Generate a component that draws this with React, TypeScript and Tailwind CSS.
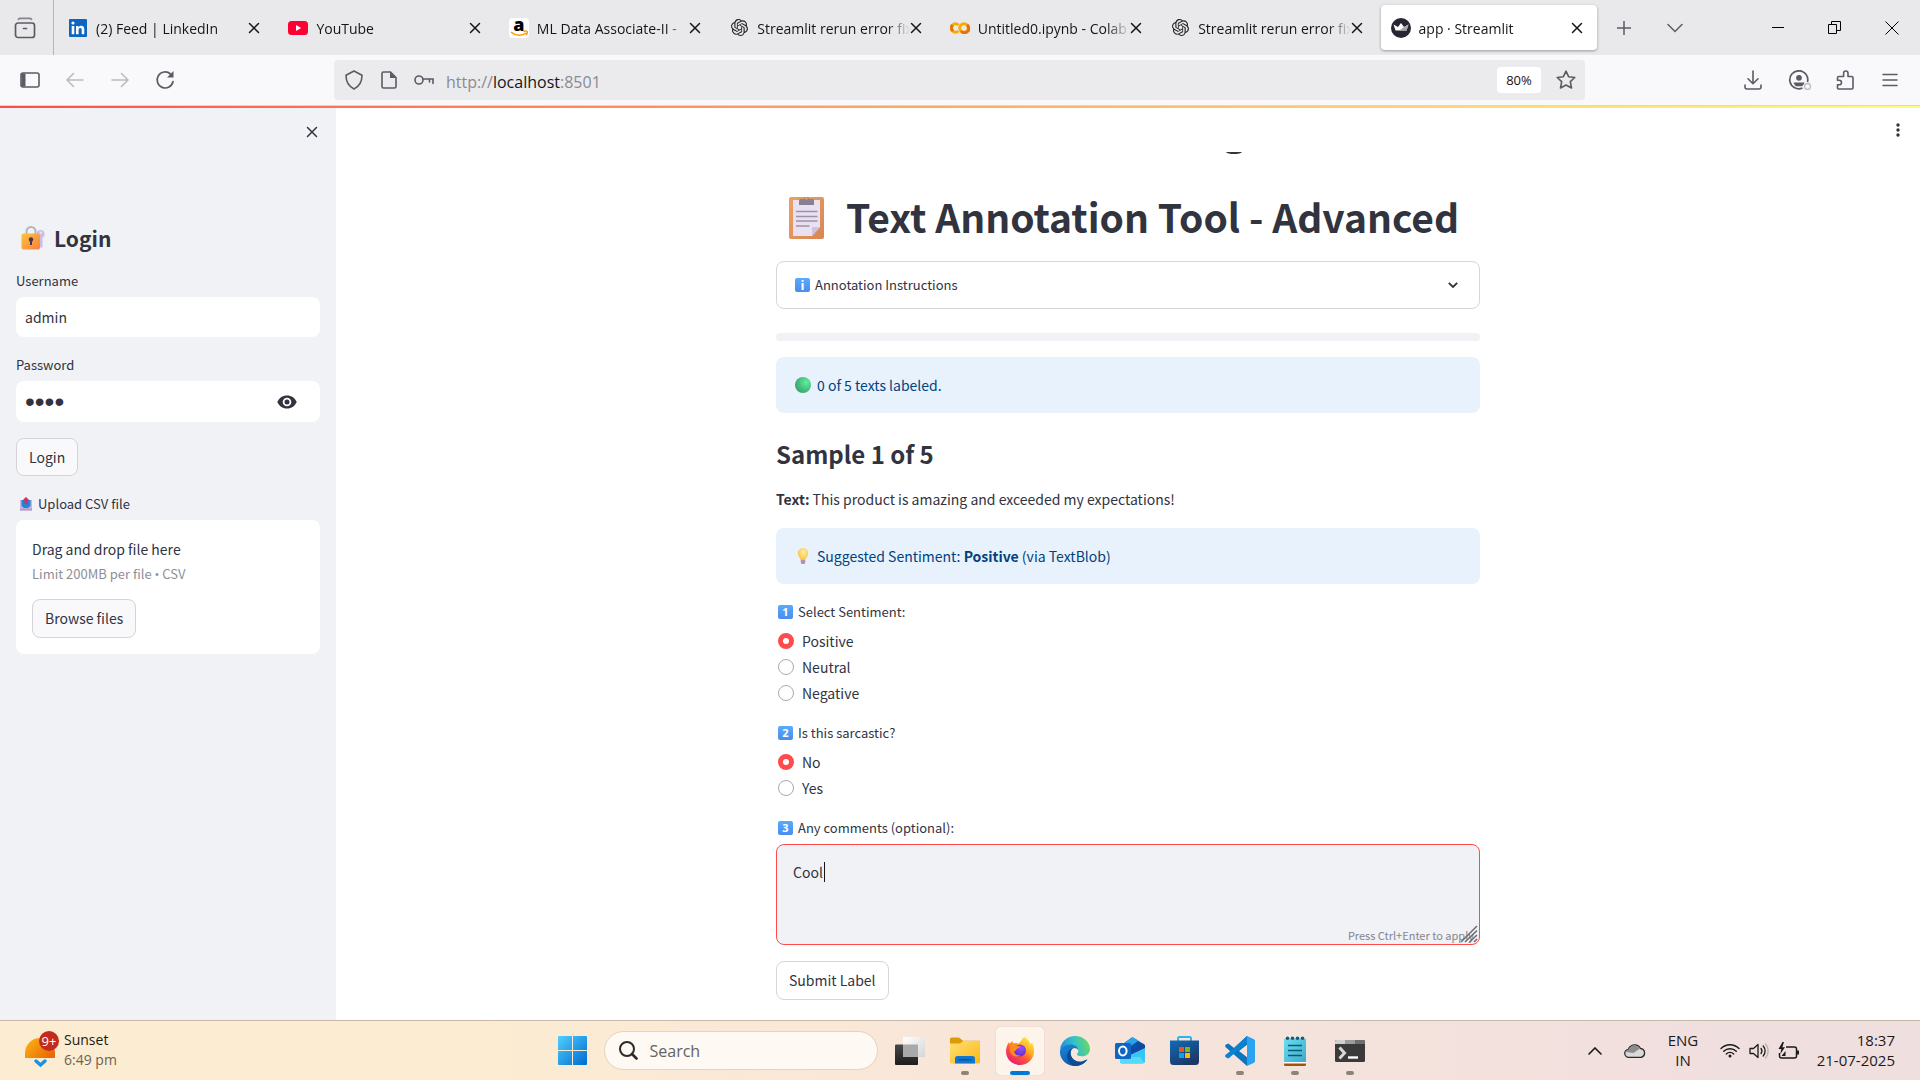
import React from "react";
import { SiOpenai } from "react-icons/si";

const TEXT = "font-['Noto_Sans_CJK_SC','Noto_Sans',sans-serif]";
const UI = "font-['Open_Sans','Noto_Sans',sans-serif]";

type P = { className?: string };

/* ---------- tab icons ---------- */

const LinkedIn = () => (
  <svg viewBox="0 0 18 18" className="size-[18px]">
    <rect width="18" height="18" rx="1" fill="#0a66c2" />
    <circle cx="4" cy="4" r="1.6" fill="#fff" />
    <path d="M2.7 7h2.6v8.300H2.700zM7 7h2.500v1.200c.5-.9 1.500-1.500 2.700-1.500 2.500 0 3.100 1.600 3.100 3.900v4.700h-2.600v-4.200c0-1.200-.2-2.200-1.500-2.200s-1.600 1-1.600 2.100v4.300H7z" fill="#fff" />
  </svg>
);
const YouTube = () => (
  <svg viewBox="0 0 20 14" className="w-5 h-3.5">
    <rect width="20" height="14" rx="3.500" fill="#ff0033" />
    <path d="M8 4l5.200 3L8 10z" fill="#fff" />
  </svg>
);
const Amazon = () => (
  <span className="relative flex size-5 items-start justify-center rounded bg-white">
    <span className="text-[18px] leading-[12px] font-extrabold text-black font-['Open_Sans',sans-serif]">a</span>
    <svg viewBox="0 0 20 20" className="absolute inset-0 size-5" fill="none" stroke="#ff9900" strokeWidth="1.500">
      <path d="M2 14c4.500 4 11 4.300 15 1M14.300 13.500c1.500-.5 3.200-.5 3.700 0s0 2.200-.8 3.500" />
    </svg>
  </span>
);
const Colab = () => (
  <svg viewBox="0 0 20 12" className="w-5 h-3" fill="none" strokeWidth="3">
    <path d="M8.500 3A4.300 4.300 0 1 0 8.500 9" stroke="#f9ab00" />
    <circle cx="14" cy="6" r="4.300" stroke="#f9ab00" />
    <path d="M11 9A4.300 4.300 0 1 0 17 3" stroke="#e8710a" />
    <path d="M2.600 3A4.300 4.300 0 0 0 3 9" stroke="#e8710a" />
  </svg>
);
const OpenAi = () => <SiOpenai className="size-[17px] text-[#222]" />;
const StreamlitCrown = () => (
  <svg viewBox="0 0 20 20" className="size-5">
    <circle cx="10" cy="10" r="10" fill="#262730" />
    <path d="M2.500 6.500l4.500 2.500L10 5l3 4 4.500-2.500L15.500 12.500h-11z" fill="#fff" />
    <path d="M13 9l4.500-2.500-2 6H8.500z" fill="#a6a6ac" />
  </svg>
);

const Cross = ({ className = "size-3" }: P) => (
  <svg viewBox="0 0 12 12" className={className} fill="none" stroke="currentColor" strokeWidth="1.500" strokeLinecap="round">
    <path d="M1.500 1.500l9 9M10.500 1.500l-9 9" />
  </svg>
);

const tabs = [
  { title: "(2) Feed | LinkedIn", icon: <LinkedIn /> },
  { title: "YouTube", icon: <YouTube /> },
  { title: "ML Data Associate-II -", icon: <Amazon /> },
  { title: "Streamlit rerun error fix", icon: <OpenAi /> },
  { title: "Untitled0.ipynb - Colab", icon: <Colab /> },
  { title: "Streamlit rerun error fix", icon: <OpenAi /> },
  { title: "app · Streamlit", icon: <StreamlitCrown />, active: true },
];

function TabStrip() {
  return (
    <div className="flex h-[55px] bg-[#e9e9eb] text-[#15141a]">
      <button aria-label="Recent browsing" className="flex w-[54px] shrink-0 items-center justify-center border-r border-[#b5b5ba] pr-1 text-[#5b5b66]">
        <svg viewBox="0 0 22 22" className="size-[22px]" fill="none" stroke="currentColor" strokeWidth="1.700" strokeLinecap="round">
          <path d="M4.500 2.300c.5-.8 1.200-1 2-1h9c.800 0 1.500.2 2 1" strokeOpacity=".7" />
          <rect x="1.500" y="6" width="19" height="14.500" rx="2.500" />
          <path d="M9.500 11.500h3" />
        </svg>
      </button>
      <div className="ml-1 grid min-w-0 flex-1 grid-cols-7 gap-1 py-[5px]">
        {tabs.map((t, i) => (
          <div
            key={i}
            className={
              t.active
                ? "flex h-[45px] min-w-0 items-center rounded bg-white pl-2.5 pr-3.5 shadow-[0_1px_3px_rgba(0,0,0,0.35)]"
                : "flex h-[45px] min-w-0 items-center pl-2.5 pr-3.5"
            }
          >
            <span className="flex w-5 shrink-0 justify-center">{t.icon}</span>
            <span className="ml-2 min-w-0 flex-1 overflow-hidden pt-0.5 text-[14px] leading-5 whitespace-nowrap [mask-image:linear-gradient(to_right,#000_85%,transparent)]">
              {t.title}
            </span>
            <button aria-label="Close tab" className="flex w-3 shrink-0 justify-center">
              <Cross />
            </button>
          </div>
        ))}
      </div>
      <div className="flex w-[323px] shrink-0 items-center text-[#5b5b66]">
        <button aria-label="New tab" className="flex w-[53px] justify-center">
          <svg viewBox="0 0 16 16" className="size-4" stroke="currentColor" strokeWidth="1.500"><path d="M8 1v14M1 8h14" /></svg>
        </button>
        <button aria-label="List all tabs" className="flex w-[49px] justify-center">
          <svg viewBox="0 0 16 10" className="w-4 h-2.5" fill="none" stroke="currentColor" strokeWidth="1.500" strokeLinecap="round"><path d="M1 1.500l7 7 7-7" /></svg>
        </button>
        <div className="ml-auto flex text-black">
          <button aria-label="Minimize" className="flex w-[57px] items-center justify-center">
            <svg viewBox="0 0 12 12" className="size-3" stroke="currentColor"><path d="M0 5.500h12" /></svg>
          </button>
          <button aria-label="Restore" className="flex w-[57px] items-center justify-center">
            <svg viewBox="0 0 13 13" className="size-[13px]" fill="none" stroke="currentColor"><path d="M.5 3.500h8v9h-8zM3.500 3.500v-3h9v9h-4" /></svg>
          </button>
          <button aria-label="Close" className="flex w-[57px] items-center justify-center">
            <svg viewBox="0 0 14 14" className="size-3.5" stroke="currentColor"><path d="M.5.5l13 13M13.500.5l-13 13" /></svg>
          </button>
        </div>
      </div>
    </div>
  );
}

function Toolbar() {
  return (
    <div className="flex h-[51px] items-center border-b border-[#d6d6e0] bg-[#f9f9fb] text-[#5b5b66]">
      <div className="flex w-[334px] shrink-0 items-center pl-[7px]">
        <button aria-label="Sidebar" className="flex w-[46px] justify-center">
          <svg viewBox="0 0 20 16" className="w-5 h-4" fill="none" stroke="currentColor" strokeWidth="1.600">
            <rect x="1" y="1" width="18" height="14" rx="2" />
            <path d="M1.500 1.500h4v13h-4z" fill="currentColor" stroke="none" />
          </svg>
        </button>
        <button aria-label="Back" className="flex w-11 justify-center text-[#bbbbc1]">
          <svg viewBox="0 0 18 16" className="w-[18px] h-4" fill="none" stroke="currentColor" strokeWidth="1.600" strokeLinecap="round" strokeLinejoin="round"><path d="M17 8H1M7.500 1.500L1 8l6.500 6.500" /></svg>
        </button>
        <button aria-label="Forward" className="flex w-[45px] justify-center text-[#bbbbc1]">
          <svg viewBox="0 0 18 16" className="w-[18px] h-4" fill="none" stroke="currentColor" strokeWidth="1.600" strokeLinecap="round" strokeLinejoin="round"><path d="M1 8h16M10.500 1.500L17 8l-6.500 6.500" /></svg>
        </button>
        <button aria-label="Reload" className="flex w-[45px] justify-center">
          <svg viewBox="0 0 20 20" className="size-5" fill="none" stroke="currentColor" strokeWidth="1.700" strokeLinecap="round">
            <path d="M18 11.500A8 8 0 1 1 15.500 4" />
            <path d="M18.500 1v6.500H12z" fill="currentColor" stroke="none" />
          </svg>
        </button>
      </div>
      <div className="flex h-10 min-w-0 flex-1 items-center rounded bg-[#ebebed] pl-[10px] pr-[9px]">
        <svg viewBox="0 0 20 20" className="size-5" fill="none" stroke="currentColor" strokeWidth="1.600" strokeLinejoin="round">
          <path d="M10 1l8 4.300c0 6-2.500 11-8 13.700C4.500 16.300 2 11.300 2 5.300z" />
        </svg>
        <svg viewBox="0 0 16 18" className="ml-[17px] w-4 h-[18px]" fill="none" stroke="currentColor" strokeWidth="1.600">
          <path d="M3 1h6.500L15 6.500V15.500a1.500 1.500 0 0 1-1.500 1.500H2.500A1.500 1.500 0 0 1 1 15.500V2.500A1.500 1.500 0 0 1 2.500 1z" />
          <path d="M9 1l6 6H9z" fill="currentColor" stroke="none" />
        </svg>
        <svg viewBox="0 0 20 12" className="ml-[17px] w-5 h-3" fill="none" stroke="currentColor" strokeWidth="1.600" strokeLinecap="round">
          <circle cx="5" cy="6" r="4" />
          <path d="M9 5h10v4.500M15.500 5v3" />
        </svg>
        <label className="sr-only" htmlFor="url">Address</label>
        <div className="relative ml-3 mt-[3px] min-w-0 flex-1">
          <input id="url" readOnly value="http://localhost:8501" className="w-full bg-transparent text-[16px] leading-6 text-transparent outline-none" />
          <span aria-hidden className="pointer-events-none absolute inset-0 text-[16px] leading-6 text-[#8a8a90]">
            http://<span className="text-[#15141a]">localhost</span>:8501
          </span>
        </div>
        <button className="h-[26px] w-11 rounded bg-white text-[13px] leading-[26px] text-[#15141a]">80%</button>
        <button aria-label="Bookmark" className="ml-[15px]">
          <svg viewBox="0 0 20 20" className="size-5" fill="none" stroke="currentColor" strokeWidth="1.600" strokeLinejoin="round">
            <path d="M10 1.200l2.600 5.500 6.200.8-4.500 4.200 1.200 6.300L10 15l-5.500 3 1.200-6.300L1.200 7.500l6.200-.8z" />
          </svg>
        </button>
      </div>
      <div className="ml-[145px] flex shrink-0 items-center pr-[7px]">
        <button aria-label="Downloads" className="flex w-[46px] justify-center">
          <svg viewBox="0 0 18 20" className="w-[18px] h-5" fill="none" stroke="currentColor" strokeWidth="1.600" strokeLinecap="round" strokeLinejoin="round">
            <path d="M9 1v12.500M4 8.800l5 4.900 5-4.900M1 15v2a2 2 0 0 0 2 2h12a2 2 0 0 0 2-2v-2" />
          </svg>
        </button>
        <button aria-label="Account" className="flex w-[47px] justify-center">
          <svg viewBox="0 0 24 20" className="w-6 h-5" fill="none" stroke="currentColor" strokeWidth="1.700">
            <path d="M14.500 18A9 9 0 1 1 19.500 12" />
            <circle cx="11" cy="7.800" r="2.900" fill="currentColor" stroke="none" />
            <path d="M5.500 12.500h11c-.5 1.500-1.500 3-2.500 3.700H8c-1.200-.8-2-2.200-2.500-3.700z" fill="currentColor" stroke="none" />
            <circle cx="19.500" cy="16.500" r="3" stroke="#bbbbc1" strokeWidth="1.300" />
          </svg>
        </button>
        <button aria-label="Extensions" className="flex w-11 justify-center">
          <svg viewBox="0 0 18 20" className="w-[18px] h-5" fill="none" stroke="currentColor" strokeWidth="1.600" strokeLinejoin="round">
            <path d="M2.500 19h13.300a1.200 1.200 0 0 0 1.200-1.200V8a1.500 1.500 0 0 0-1.500-1.500H12V3.200a2.200 2.200 0 0 0-4.400 0v3.300H3A1.500 1.500 0 0 0 1.500 8v2.200h1.700a2.200 2.200 0 0 1 0 4.600H1.500V18a1 1 0 0 0 1 1z" />
          </svg>
        </button>
        <button aria-label="Menu" className="flex w-[46px] justify-center">
          <svg viewBox="0 0 16 14" className="w-4 h-3.5" stroke="currentColor" strokeWidth="1.500" strokeLinecap="round"><path d="M1 1.500h14M1 7h14M1 12.500h14" /></svg>
        </button>
      </div>
    </div>
  );
}

/* ---------- content icons ---------- */

const LockIcon = () => (
  <svg viewBox="0 0 24 24" className="size-6">
    <defs>
      <linearGradient id="lk" x1="0" y1="0" x2="1" y2="1"><stop offset="0" stopColor="#fcc53a" /><stop offset="1" stopColor="#fb7d45" /></linearGradient>
    </defs>
    <path d="M5.500 9V5.500a4.500 4.500 0 0 1 9 0V9" fill="none" stroke="#b7b0bc" strokeWidth="2" />
    <circle cx="19.500" cy="8" r="4" fill="#cbbfe0" />
    <path d="M18 10h3.500v11.500H18z" fill="#cbbfe0" />
    <circle cx="19.800" cy="6.700" r="1.100" fill="#f0eaf8" />
    <rect x="0.500" y="7.500" width="18.500" height="16" rx="2" fill="url(#lk)" />
    <circle cx="10" cy="13.500" r="2.200" fill="#4a3447" />
    <path d="M9 14h2v5H9z" fill="#4a3447" />
  </svg>
);
const OutboxIcon = () => (
  <svg viewBox="0 0 12 14" className="w-3 h-3.5">
    <path d="M0 3h12v10.500H0z" fill="#c9b6dc" />
    <path d="M1.500 3h9v6L8 11H4L1.500 9z" fill="#1f86d8" />
    <path d="M0 11.500h12v2H0z" fill="#b79bcb" />
    <path d="M6 0l3.300 3.300H7.500V7h-3V3.300H2.700z" fill="#dc2a5f" />
  </svg>
);
const ClipboardIcon = () => (
  <svg viewBox="0 0 35 44" className="w-[35px] h-11">
    <defs>
      <linearGradient id="cb" x1="0" y1="0" x2="1" y2="1"><stop offset="0" stopColor="#e8a266" /><stop offset="1" stopColor="#da8650" /></linearGradient>
    </defs>
    <rect y="2" width="35" height="42" rx="2" fill="url(#cb)" />
    <path d="M4 5h27v27l-8 9H4z" fill="#e9e0f2" />
    <path d="M31 32h-7a1 1 0 0 0-1 1v8z" fill="#cfc2de" />
    <path d="M10 10V5.500A1.500 1.500 0 0 1 11.500 4H15a2.600 2.600 0 0 1 5 0h3.500A1.500 1.500 0 0 1 25 5.500V10z" fill="#8b7f92" />
    <circle cx="17.500" cy="3.500" r="1.200" fill="#e8a266" />
    <path d="M7 16.500h21.500M7 21.500h21.500M7 26h21.500M7 31h13.500" stroke="#9c93a8" strokeWidth="1.500" />
  </svg>
);
const GreenBall = () => (
  <svg viewBox="0 0 16 16" className="size-4">
    <defs><radialGradient id="gb" cx="0.700" cy="0.350" r="0.750"><stop offset="0" stopColor="#5fee9c" /><stop offset="1" stopColor="#37a06c" /></radialGradient></defs>
    <circle cx="8" cy="8" r="8" fill="url(#gb)" />
  </svg>
);
const Bulb = () => (
  <svg viewBox="0 0 12 16" className="w-3 h-4">
    <defs><radialGradient id="bl" cx="0.550" cy="0.350" r="0.700"><stop offset="0" stopColor="#fff3a0" /><stop offset="1" stopColor="#fab638" /></radialGradient></defs>
    <path d="M3.700 12.500C3.500 9.500.8 8.500.8 5.300a5.200 5.200 0 0 1 10.400 0c0 3.200-2.700 4.200-2.900 7.200z" fill="url(#bl)" />
    <path d="M3.800 12h4.400v2.500A1.500 1.500 0 0 1 6.700 16H5.300a1.500 1.500 0 0 1-1.500-1.500z" fill="#b393b5" />
  </svg>
);
const Key = ({ n }: { n: string }) => (
  <span className="flex h-3.5 w-[15px] items-center justify-center rounded-[2px] bg-linear-to-b from-[#5aabfa] to-[#4a8cee] text-[11px] leading-[14px] font-bold text-white font-['Open_Sans',sans-serif]">
    {n}
  </span>
);
const Eye = () => (
  <svg viewBox="0 0 20 14" className="w-5 h-3.5">
    <path d="M10 .5C5.500.5 1.800 3.200.3 7c1.500 3.800 5.200 6.500 9.700 6.500s8.200-2.700 9.700-6.500C18.200 3.200 14.500.5 10 .5z" fill="#31333f" />
    <circle cx="10" cy="7" r="4.300" fill="#fff" />
    <circle cx="10" cy="7" r="2.500" fill="#31333f" />
  </svg>
);

function Sidebar() {
  return (
    <aside className="w-[336px] shrink-0 bg-[#f0f2f6] px-4 text-[#31333f]">
      <div className="flex h-12 items-center justify-end pr-[2px]">
        <button aria-label="Close sidebar"><Cross className="size-3" /></button>
      </div>
      <h2 className="mt-[67px] flex h-[30px] items-center gap-[9px] pl-[5px] text-[21px] leading-[30px] font-bold">
        <LockIcon />
        Login
      </h2>
      <label htmlFor="user" className="mt-4 block text-[13px] leading-6">Username</label>
      <input id="user" defaultValue="admin" className="mt-1 block h-10 w-full rounded-lg bg-white px-[9px] text-[14px] outline-none" />
      <label htmlFor="pass" className="mt-4 block text-[13px] leading-6">Password</label>
      <div className="mt-1 flex h-[41px] items-center rounded-lg bg-white pl-[9px] pr-[23px]">
        <input id="pass" type="password" defaultValue="pass" className="h-8 min-w-0 flex-1 bg-transparent text-[28px] outline-none font-['Liberation_Sans',sans-serif]" />
        <button aria-label="Show password"><Eye /></button>
      </div>
      <button className="mt-4 block h-[38px] rounded-lg border border-[#d3d4da] bg-[#f9f9fb] px-3 text-[14px]">Login</button>
      <label htmlFor="file" className="mt-4 flex items-center gap-1.5 pl-1 text-[13px] leading-6">
        <OutboxIcon />
        Upload CSV file
      </label>
      <div className="mt-1 rounded-lg bg-white p-4">
        <p className="text-[14px] leading-[26px]">Drag and drop file here</p>
        <p className="text-[13px] leading-6 text-[#8d8f98]">
          Limit 200MB per file <span className="font-['Open_Sans',sans-serif]">•</span> CSV
        </p>
        <input id="file" type="file" className="sr-only" />
        <button className="mt-[13px] block h-[39px] rounded-lg border border-[#d3d4da] bg-[#f9f9fb] px-3 text-[14px]">Browse files</button>
      </div>
    </aside>
  );
}

function RadioGroup({ n, legend, name, options }: { n: string; legend: string; name: string; options: string[] }) {
  return (
    <fieldset>
      <legend className="flex items-center gap-[5px] pl-[2px] text-[13px] leading-6">
        <Key n={n} />
        {legend}
      </legend>
      <div className="mt-1">
        {options.map((o, i) => (
          <label key={o} className="flex h-[26px] w-fit items-center gap-2 pl-[2px] text-[14px] leading-[26px]">
            <input
              type="radio"
              name={name}
              defaultChecked={i === 0}
              className="size-4 appearance-none rounded-full border border-[#a9aab0] bg-white checked:border-5 checked:border-[#ff4b4b]"
            />
            {o}
          </label>
        ))}
      </div>
    </fieldset>
  );
}

function Main() {
  return (
    <main className="relative flex min-w-0 flex-1 justify-center bg-white text-[#31333f]">
      <button aria-label="Main menu" className="absolute top-[15px] right-5">
        <svg viewBox="0 0 4 14" className="w-1 h-3.5" fill="currentColor"><circle cx="2" cy="2" r="1.700" /><circle cx="2" cy="7" r="1.700" /><circle cx="2" cy="12" r="1.700" /></svg>
      </button>
      <div className="w-[704px] pb-5">
        <div className="flex h-[46px] items-end justify-end pr-[238px]">
          <svg viewBox="0 0 16 2" className="w-4 h-0.5"><path d="M0 0h16c-1.500 2.800-14.500 2.800-16 0z" fill="#31333f" /></svg>
        </div>
        <h1 className="mt-9 flex h-[53px] items-center gap-[22px] pl-[13px] text-[39px] leading-[53px] font-bold whitespace-nowrap">
          <ClipboardIcon />
          Text Annotation Tool - Advanced
        </h1>
        <button className="mt-[18px] flex h-12 w-full items-center rounded-lg border border-[#d6d6d9] pr-[21px] pl-[18px] text-[13px]">
          <span className="mr-[5px] flex h-3.5 w-[15px] items-center justify-center rounded-[2px] bg-linear-to-b from-[#5aabfa] to-[#4a8cee] text-[13px] leading-[14px] font-bold text-white font-['Open_Sans',sans-serif]">i</span>
          Annotation Instructions
          <svg viewBox="0 0 10 6" className="ml-auto w-2.5 h-1.5" fill="none" stroke="currentColor" strokeWidth="1.800"><path d="M.8.8L5 5 9.200.8" /></svg>
        </button>
        <div role="progressbar" aria-valuenow={0} className="mt-6 h-2 rounded bg-[#f0f2f6]" />
        <div className="mt-4 flex h-14 items-center gap-1.5 rounded-lg bg-[#e8f2fc] pl-[19px] text-[14px] text-[#004280]">
          <GreenBall />
          0 of 5 texts labeled.
        </div>
        <h3 className="mt-4 pt-[7px] pb-2 text-[24px] leading-[35px] font-bold">Sample 1 of 5</h3>
        <p className="mt-2 text-[14px] leading-6"><strong>Text:</strong> This product is amazing and exceeded my expectations!</p>
        <div className="mt-[17px] flex h-14 items-center gap-2 rounded-lg bg-[#e8f2fc] pl-[21px] text-[14px] text-[#004280]">
          <Bulb />
          <span>Suggested Sentiment: <strong>Positive</strong> (via TextBlob)</span>
        </div>
        <div className="mt-4 flex flex-col gap-[15px]">
          <RadioGroup n="1" legend="Select Sentiment:" name="sentiment" options={["Positive", "Neutral", "Negative"]} />
          <RadioGroup n="2" legend="Is this sarcastic?" name="sarcastic" options={["No", "Yes"]} />
        </div>
        <label htmlFor="comments" className="mt-[15px] flex items-center gap-[5px] pl-[2px] text-[13px] leading-6">
          <Key n="3" />
          Any comments (optional):
        </label>
        <div className="relative mt-1 flex">
          <textarea
            id="comments"
            defaultValue="Cool"
            className="h-[101px] w-full resize-none rounded-lg border border-[#ff4b4b] bg-[#f0f2f6] px-4 py-[15px] text-[14px] leading-6 outline-none"
          />
          <span aria-hidden className="absolute top-[18px] left-12 h-5 w-px bg-[#15141a]" />
          <span className="absolute right-1.5 bottom-0.5 text-[11px] leading-4 text-[#83858f]">Press Ctrl+Enter to apply</span>
          <svg viewBox="0 0 18 18" className="absolute right-0.5 bottom-0.5 size-[18px]" stroke="#6b6b70" strokeWidth="1.500">
            <path d="M1 17L17 1M5 17L17 5.500M9.500 17L17 10M14 17l3-3" />
          </svg>
        </div>
        <button className="mt-4 block h-[39px] rounded-lg border border-[#d6d6d9] bg-white px-3 text-[14px]">Submit Label</button>
      </div>
    </main>
  );
}

/* ---------- taskbar ---------- */

const WindowsLogo = () => (
  <svg viewBox="0 0 29 29" className="size-[29px]">
    <defs><linearGradient id="wl" gradientUnits="userSpaceOnUse" x1="0" y1="0" x2="29" y2="29"><stop offset="0" stopColor="#4fd0ff" /><stop offset="1" stopColor="#0069cf" /></linearGradient></defs>
    <path d="M0 1a1 1 0 0 1 1-1h13v14H0zM15 0h13a1 1 0 0 1 1 1v13H15zM0 15h14v14H1a1 1 0 0 1-1-1zM15 15h14v13a1 1 0 0 1-1 1H15z" fill="url(#wl)" />
  </svg>
);
const TaskView = () => (
  <svg viewBox="0 0 30 28" className="w-[30px] h-7">
    <defs>
      <linearGradient id="tv" x2="0" y2="1"><stop offset="0" stopColor="#484848" /><stop offset="1" stopColor="#1c1c1c" /></linearGradient>
      <linearGradient id="tw" x2="1" y2="1"><stop offset="0" stopColor="#fff" /><stop offset="1" stopColor="#d5d5d5" /></linearGradient>
    </defs>
    <rect y="7.500" width="23" height="20.500" rx="1" fill="url(#tv)" />
    <rect x="8" width="22" height="20" rx="1" fill="url(#tw)" />
    <path d="M8 7.500h15V20H8z" fill="#a9a9a9" />
  </svg>
);
const Folder = () => (
  <svg viewBox="0 0 30 28" className="w-[30px] h-7">
    <defs><linearGradient id="fo" x2="1" y2="1"><stop offset="0" stopColor="#ffdf76" /><stop offset="1" stopColor="#fcb813" /></linearGradient></defs>
    <path d="M0 2a1.500 1.500 0 0 1 1.500-1.500H9l4 3.200h16A1 1 0 0 1 30 5v4H0z" fill="#de9b05" />
    <path d="M0 6.500h10L13.500 4H29a1 1 0 0 1 1 1v20a1.500 1.500 0 0 1-1.500 1.500h-27A1.500 1.500 0 0 1 0 25z" fill="url(#fo)" />
    <path d="M5 26.500v-5A2.500 2.500 0 0 1 7.500 19h15a2.500 2.500 0 0 1 2.500 2.500v5z" fill="#1176cd" />
    <path d="M8.500 22.800h13" stroke="#0a4b8f" strokeWidth="1.200" />
  </svg>
);
const Firefox = () => (
  <svg viewBox="0 0 28 28" className="size-7">
    <defs>
      <linearGradient id="fx" x1=".9" y1="0.050" x2=".2" y2="1"><stop offset="0" stopColor="#fff24a" /><stop offset=".35" stopColor="#ffb01f" /><stop offset=".6" stopColor="#ff5a36" /><stop offset="1" stopColor="#e4127e" /></linearGradient>
      <radialGradient id="fp" cx=".6" cy=".3" r=".8"><stop offset="0" stopColor="#9a4dfc" /><stop offset="1" stopColor="#5a2cc8" /></radialGradient>
    </defs>
    <path d="M18.500 0c3.200 2 5 4.500 6 7l1.500-1c1.600 2.700 2 5.500 2 8.500C28 22 21.700 28 14 28S0 22 0 14.500C0 10.500 1.300 7.500 3 5c.1 1 .3 1.500.7 2C4.500 5.500 5.500 4.500 6.500 4c0 1 .3 1.800.9 2.400 1.300-.4 3-.4 4.400 0C14.500 6.500 15 2 18.500 0z" fill="url(#fx)" />
    <circle cx="14" cy="13.500" r="6" fill="url(#fp)" />
    <path d="M4 8c2-1.200 4.500-1 6.500.4 1.500.8 3 .6 4 1.300-1 1.500-3.500 1.500-4 2.500-.4 1.500-1.500 2-2.500 1.800.5 3.500 3.500 5 6.500 4.500-4 2.500-9.500.5-10.500-4.500-.4-2-.4-4 0-6z" fill="#ff8a24" />
  </svg>
);
const Edge = () => (
  <svg viewBox="0 0 30 30" className="size-[30px]">
    <defs>
      <linearGradient id="e1" x1="0" y1=".5" x2="1" y2=".3"><stop offset="0" stopColor="#1f8fdc" /><stop offset=".5" stopColor="#35c1c9" /><stop offset="1" stopColor="#6bdc5a" /></linearGradient>
      <linearGradient id="e2" x1="0" y1="0" x2=".5" y2="1"><stop offset="0" stopColor="#1a86d6" /><stop offset="1" stopColor="#0e5cae" /></linearGradient>
    </defs>
    <path d="M0 14C.6 6 7 0 15 0c9 0 15 6.500 15 13 0 4.500-3.500 7.300-8 7.300-3.500 0-5-1-5-2 0-.8 1.300-1.200 1.300-3.500 0-3-3-5.300-6.800-5.300C6 9.500 1.500 11.500 0 14z" fill="url(#e1)" />
    <path d="M0 15C.5 11.500 5 8.500 10.500 8.500c4 0 7.500 2.300 7.800 5.500-1-1.300-2.500-2-4-2C12 12 10 15 11 19c1 4.500 6 7.500 11 6.500 2-.4 3.500-1.300 5-2C24.500 27.500 20 30 15 30 6 30-.7 22.500 0 15z" fill="url(#e2)" />
    <path d="M14.300 12C11 12.500 9.500 16 11 20c1.700 4.500 7 7 12 5.300 1.500-.5 3-1.200 4.500-2-3 5-8.500 7-13.500 6.700C8.500 28 6 23 7.500 18c1-3.500 3.800-6 6.800-6z" fill="#0b4a94" />
  </svg>
);
const Outlook = () => (
  <svg viewBox="0 0 30 27" className="w-[30px] h-[27px]">
    <path d="M5 9L16.500.8a2 2 0 0 1 2 0L30 8v10H5z" fill="#0a4fa8" />
    <path d="M5 9L16.500.8a2 2 0 0 1 2 0l5 3L10 13z" fill="#2aa2ea" />
    <path d="M12 15L28 6.500l2 2V14L16 22z" fill="#1247a4" />
    <path d="M5 14l10 4 15-7v13a2.500 2.500 0 0 1-2.500 2.500h-20A2.500 2.500 0 0 1 5 24z" fill="#38c5f4" />
    <path d="M5 26V20h20l4 5.500c-.5.700-1 1-1.500 1H7z" fill="#55dbf7" />
    <rect y="6" width="16" height="16" rx="1.500" fill="#0f65c0" />
    <ellipse cx="7.800" cy="14" rx="3.800" ry="4.400" fill="none" stroke="#fff" strokeWidth="2" />
  </svg>
);
const Store = () => (
  <svg viewBox="0 0 29 29" className="size-[29px]">
    <defs><linearGradient id="st" x2=".6" y2="1"><stop offset="0" stopColor="#0f6cb8" /><stop offset="1" stopColor="#1f3765" /></linearGradient></defs>
    <path d="M8 6V2.500A1.500 1.500 0 0 1 9.500 1h10A1.500 1.500 0 0 1 21 2.500V6" fill="none" stroke="#2bb4ee" strokeWidth="2" />
    <path d="M0 4.500h29v21a3.500 3.500 0 0 1-3.500 3.500h-22A3.500 3.500 0 0 1 0 25.500z" fill="url(#st)" />
    <path d="M9 11h5v5H9z" fill="#f25022" /><path d="M15 11h5v5h-5z" fill="#7fba00" /><path d="M9 17h5v5H9z" fill="#00a4ef" /><path d="M15 17h5v5h-5z" fill="#ffb900" />
  </svg>
);
const VsCode = () => (
  <svg viewBox="0 0 30 30" className="size-[30px]">
    <path d="M22 0L9 12 3.500 7.500 1 8.500c-1 .7-1 2-.3 2.800L22 30l1-8-9-7 9-7z" fill="#0b75bd" />
    <path d="M.7 18.700c-.9.900-.7 2 .3 2.800l2.500 1L22 6.500V0L9 12z" fill="#0d82cf" />
    <path d="M22 0l7 3.300a2 2 0 0 1 1 1.700v20a2 2 0 0 1-1 1.700L22 30z" fill="#29a3f2" />
  </svg>
);
const Notepad = () => (
  <svg viewBox="0 0 22 30" className="w-[22px] h-[30px]">
    <defs><linearGradient id="np" x2="1" y2="1"><stop offset="0" stopColor="#69def0" /><stop offset="1" stopColor="#3fa9c9" /></linearGradient></defs>
    <path d="M0 26h22v2.500a1.500 1.500 0 0 1-1.500 1.500h-19A1.500 1.500 0 0 1 0 28.500z" fill="#a4500f" />
    <path d="M0 26h22v1.500H0z" fill="#fff" />
    <path d="M0 3h22v23H0z" fill="url(#np)" />
    <path d="M4 9.500h14M4 14.500h14M4 19.500h14" stroke="#055a78" strokeWidth="1.600" />
    <g fill="#0b5f80"><circle cx="3.500" cy="2.200" r="1.800" /><circle cx="8.500" cy="2.200" r="1.800" /><circle cx="13.500" cy="2.200" r="1.800" /><circle cx="18.500" cy="2.200" r="1.800" /></g>
  </svg>
);
const Terminal = () => (
  <svg viewBox="0 0 30 22" className="w-[30px] h-[22px]">
    <rect width="30" height="22" rx="1.500" fill="#3a3a3a" />
    <path d="M0 4V1.500A1.500 1.500 0 0 1 1.500 0H10v4z" fill="#cfcfcf" /><path d="M10 0h10v4H10z" fill="#9b9b9b" /><path d="M20 0h8.500A1.500 1.500 0 0 1 30 1.500V4H20z" fill="#6e6e6e" />
    <path d="M4.500 7.500L9.500 13l-5 5.500" fill="none" stroke="#d8d8d8" strokeWidth="3" />
    <path d="M13 17.500h10" stroke="#fff" strokeWidth="2.400" />
  </svg>
);

const apps = [
  { name: "Task View", icon: <TaskView />, state: "none" },
  { name: "File Explorer", icon: <Folder />, state: "open" },
  { name: "Firefox", icon: <Firefox />, state: "active" },
  { name: "Edge", icon: <Edge />, state: "none" },
  { name: "Outlook", icon: <Outlook />, state: "none" },
  { name: "Microsoft Store", icon: <Store />, state: "none" },
  { name: "VS Code", icon: <VsCode />, state: "open" },
  { name: "Notepad", icon: <Notepad />, state: "open" },
  { name: "Terminal", icon: <Terminal />, state: "open" },
];

function Taskbar() {
  return (
    <footer className="grid h-[60px] grid-cols-[1fr_auto_1fr] items-center border-t border-[#c6b8ab] bg-linear-to-r from-[#fcecd1] from-25% via-[#fae8d8] via-40% to-[#f0dfdf] to-90% text-[#1b1b1b]">
      <button className="flex items-center pb-0.5 pl-[25px] text-left">
        <svg viewBox="0 0 34 37" className="w-[34px] h-[37px]">
          <defs><linearGradient id="sun" x2="1" y2=".6"><stop offset="0" stopColor="#fdb813" /><stop offset="1" stopColor="#ea6a0a" /></linearGradient></defs>
          <path d="M0 27V22a15 15 0 0 1 30 0v5z" fill="url(#sun)" />
          <path d="M11 30l4.500 4 4.500-4" fill="none" stroke="#1793e6" strokeWidth="3.500" strokeLinecap="round" />
          <circle cx="24" cy="10" r="10" fill="#c42b1c" />
          <text x="24" y="14.500" textAnchor="middle" fontSize="13" fill="#fff" fontFamily="Open Sans">9+</text>
        </svg>
        <span className="ml-[5px] block text-[14px] leading-5">
          Sunset
          <span className="block text-[#6b6255]">6:49 pm</span>
        </span>
      </button>
      <div className="flex items-center pl-[11px]">
        <button aria-label="Start"><WindowsLogo /></button>
        <label className="ml-[17px] flex h-[39px] w-[274px] items-center rounded-full border border-[#e4d3c1] bg-[#fef9f2] pl-3.5">
          <svg viewBox="0 0 19 19" className="size-[19px]" fill="none" stroke="#2b2b2b" strokeWidth="2" strokeLinecap="round"><circle cx="8" cy="8" r="7" /><path d="M13 13l4.500 4.500" strokeWidth="2.600" /></svg>
          <span className="sr-only">Search</span>
          <input placeholder="Search" className="ml-3 w-40 bg-transparent text-[16px] outline-none placeholder:text-[#636363]" />
        </label>
        <div className="ml-2 flex gap-[7px]">
          {apps.map((a) => (
            <button
              key={a.name}
              aria-label={a.name}
              className={a.state === "active" ? "relative flex size-12 items-center justify-center rounded bg-[#fdf5ec] shadow-[0_0_1px_rgba(0,0,0,0.25)]" : "relative flex size-12 items-center justify-center"}
            >
              {a.icon}
              {a.state === "active" && <span className="absolute bottom-0 h-1 w-5 rounded-full bg-[#0078d4]" />}
              {a.state === "open" && <span className="absolute bottom-0 h-1 w-2 rounded-full bg-[#8d8378]" />}
            </button>
          ))}
        </div>
      </div>
      <div className="flex items-center justify-end pr-[25px]">
        <button aria-label="Hidden icons">
          <svg viewBox="0 0 14 8" className="w-3.5 h-2" fill="none" stroke="currentColor" strokeWidth="1.600" strokeLinecap="round"><path d="M1 7l6-6 6 6" /></svg>
        </button>
        <svg viewBox="0 0 22 14" className="ml-[22px] w-[22px] h-3.5">
          <path d="M5 13.300a4 4 0 0 1-.5-8A6.500 6.500 0 0 1 16.500 4.500a4.500 4.500 0 0 1 .8 8.800z" fill="#d9d9d9" stroke="#2b2b2b" strokeWidth="1.300" />
          <path d="M2 8a4 4 0 0 1 2.500-2.500A6.500 6.500 0 0 1 16 4.500L9.500 9z" fill="#8c8c8c" />
        </svg>
        <span className="ml-5 w-[34px] pb-0.5 text-center text-[15px] leading-5">ENG<br />IN</span>
        <button aria-label="Network, volume and battery" className="ml-5 flex items-center gap-[9px]">
          <svg viewBox="0 0 20 15" className="w-5 h-[15px]" fill="none" stroke="currentColor" strokeWidth="1.400" strokeLinecap="round">
            <path d="M1 5.500a12.700 12.700 0 0 1 18 0M3.700 8.300a9 9 0 0 1 12.600 0M6.300 10.900a5.200 5.200 0 0 1 7.400 0" />
            <circle cx="10" cy="13" r="1.500" fill="currentColor" stroke="none" />
          </svg>
          <svg viewBox="0 0 20 16" className="w-5 h-4" fill="none" stroke="currentColor" strokeWidth="1.300" strokeLinecap="round" strokeLinejoin="round">
            <path d="M1 5.500h3.500L9 1.500v13l-4.500-4H1zM12 5.500a4 4 0 0 1 0 5M14.200 3a7.500 7.500 0 0 1 0 10" />
            <path d="M16.500 1a10.500 10.500 0 0 1 0 14" strokeOpacity=".25" />
          </svg>
          <svg viewBox="0 0 22 18" className="w-[22px] h-[18px]" fill="none" stroke="currentColor" strokeWidth="1.500">
            <path d="M8 5h8.500A2 2 0 0 1 18.500 7v7a2 2 0 0 1-2 2h-13a2 2 0 0 1-2-2v-3" />
            <path d="M19 8.500h2v4h-2z" fill="currentColor" stroke="none" />
            <path d="M4.500 0L.5 7h2.800l-1 5L7 5.200H4.300L6 0zM3.500 14l4-5v5z" fill="currentColor" stroke="none" />
          </svg>
        </button>
        <span className="ml-4 w-[79px] whitespace-nowrap pb-0.5 text-right text-[15px] leading-5">18:37<br />21-07-2025</span>
      </div>
    </footer>
  );
}

export default function App() {
  return (
    <div className={`flex min-h-screen flex-col ${UI}`}>
      <header>
        <TabStrip />
        <Toolbar />
      </header>
      <div className="h-0.5 bg-linear-to-r from-[#ff4b4b] to-[#fffd80]" />
      <div className={`flex flex-1 ${TEXT}`}>
        <Sidebar />
        <Main />
      </div>
      <Taskbar />
    </div>
  );
}
